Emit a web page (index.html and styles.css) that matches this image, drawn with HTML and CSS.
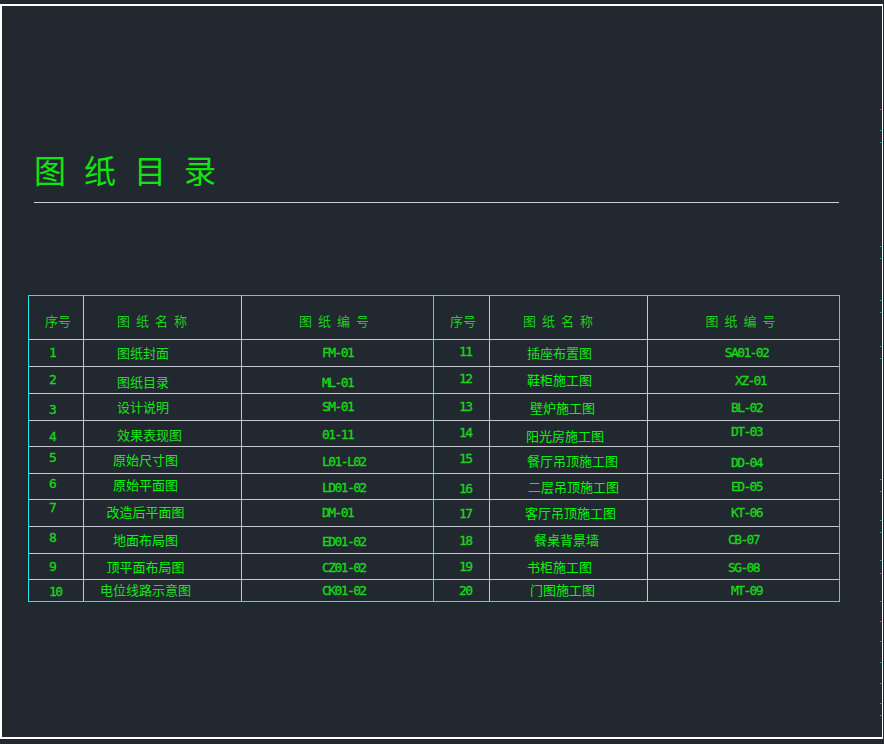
FILE: index.html
```html
<!DOCTYPE html>
<html lang="zh-CN">
<head>
<meta charset="utf-8">
<title>图纸目录</title>
<link rel="stylesheet" href="styles.css">
</head>
<body>
<div class="sheet">
  <h1 class="title">图纸目录</h1>

  <div class="table">
    <div class="half left">
      <div class="cell hd no1">序号</div>
      <div class="cell hd sp nm">图纸名称</div>
      <div class="cell hd sp cdh">图纸编号</div>

      <div class="cell num no1">1</div>
      <div class="cell name nm dim">图纸封面</div>
      <div class="cell code cd">FM-01</div>

      <div class="cell num no1">2</div>
      <div class="cell name nm dim v2">图纸目录</div>
      <div class="cell code cd v3">ML-01</div>

      <div class="cell num no1 v3">3</div>
      <div class="cell name nm dim">设计说明</div>
      <div class="cell code cd">SM-01</div>

      <div class="cell num no1 v3">4</div>
      <div class="cell name nm dim v1">效果表现图</div>
      <div class="cell code cd v1">01-11</div>

      <div class="cell num no1 vm2">5</div>
      <div class="cell name ctr">原始尺寸图</div>
      <div class="cell code cd v2">L01-L02</div>

      <div class="cell num no1 vm3">6</div>
      <div class="cell name ctr vm2">原始平面图</div>
      <div class="cell code cd v1">LD01-02</div>

      <div class="cell num no1 vm5">7</div>
      <div class="cell name ctr vm1">改造后平面图</div>
      <div class="cell code cd">DM-01</div>

      <div class="cell num no1 vm2">8</div>
      <div class="cell name ctr">地面布局图</div>
      <div class="cell code cd v2">ED01-02</div>

      <div class="cell num no1">9</div>
      <div class="cell name ctr">顶平面布局图</div>
      <div class="cell code cd v1">CZ01-02</div>

      <div class="cell num no1 v1">10</div>
      <div class="cell name ctr dim vm1">电位线路示意图</div>
      <div class="cell code cd">CK01-02</div>
    </div>

    <div class="half right">
      <div class="cell hd no1">序号</div>
      <div class="cell hd sp nm">图纸名称</div>
      <div class="cell hd sp cdh6">图纸编号</div>

      <div class="cell num no2 vm1">11</div>
      <div class="cell name nm5 dim">插座布置图</div>
      <div class="cell code cd6">SA01-02</div>

      <div class="cell num no2 vm1">12</div>
      <div class="cell name nm5">鞋柜施工图</div>
      <div class="cell code cd6 h4 v1">XZ-01</div>

      <div class="cell num no2">13</div>
      <div class="cell name nm5 h3 v1">壁炉施工图</div>
      <div class="cell code cd6 v1">BL-02</div>

      <div class="cell num no2 vm1">14</div>
      <div class="cell name nm5 hm1 v2">阳光房施工图</div>
      <div class="cell code cd6 vm2">DT-03</div>

      <div class="cell num no2 vm1">15</div>
      <div class="cell name nm5 v1">餐厅吊顶施工图</div>
      <div class="cell code cd6 v3">DD-04</div>

      <div class="cell num no2 v2">16</div>
      <div class="cell name nm5 h1">二层吊顶施工图</div>
      <div class="cell code cd6">ED-05</div>

      <div class="cell num no2 v1">17</div>
      <div class="cell name nm5 hm2">客厅吊顶施工图</div>
      <div class="cell code cd6">KT-06</div>

      <div class="cell num no2 v1">18</div>
      <div class="cell name nm5 h7">餐桌背景墙</div>
      <div class="cell code cd6 hm3">CB-07</div>

      <div class="cell num no2">19</div>
      <div class="cell name nm5">书柜施工图</div>
      <div class="cell code cd6 hm3 v1">SG-08</div>

      <div class="cell num no2">20</div>
      <div class="cell name nm5 h3 vm1">门图施工图</div>
      <div class="cell code cd6">MT-09</div>
    </div>
  </div>

  <div class="ruler">
    <i class="tick" style="top:103px"></i>
    <i class="tick" style="top:124px"></i>
    <i class="tick" style="top:136px"></i>
    <i class="tick" style="top:240px"></i>
    <i class="tick" style="top:252px"></i>
    <i class="tick" style="top:294px"></i>
    <i class="tick" style="top:306px"></i>
    <i class="tick" style="top:340px"></i>
    <i class="tick" style="top:352px"></i>
    <i class="tick" style="top:473px"></i>
    <i class="tick" style="top:485px"></i>
    <i class="tick" style="top:514px"></i>
    <i class="tick" style="top:526px"></i>
    <i class="tick" style="top:554px"></i>
    <i class="tick" style="top:567px"></i>
    <i class="tick" style="top:595px"></i>
    <i class="tick" style="top:615px"></i>
    <i class="tick" style="top:635px"></i>
    <i class="tick" style="top:656px"></i>
    <i class="tick" style="top:677px"></i>
    <i class="tick" style="top:697px"></i>
    <i class="tick" style="top:709px"></i>
  </div>
</div>
</body>
</html>
```

FILE: styles.css
```css
html, body {
  margin: 0;
  padding: 0;
  background: #212830;
}

.sheet {
  position: relative;
  box-sizing: border-box;
  width: 883px;
  height: 735px;
  margin-top: 4px;
  border: 2px solid #ffffff;
  border-right-width: 1px;
  background: #212830;
  overflow: hidden;
}

.title {
  margin: 0 0 0 32px;
  width: 805px;
  padding: 147px 0 17px 0;
  font-family: "Noto Sans CJK SC", sans-serif;
  font-weight: 400;
  font-size: 32px;
  line-height: 32px;
  letter-spacing: 18px;
  color: #12e412;
  border-bottom: 1px solid #cfcfcf;
}

.table {
  display: flex;
  gap: 1px;
  width: fit-content;
  margin: 92px 0 0 26px;
  border: 1px solid #22e4ec;
  background: #22e4ec;
}

.half {
  display: grid;
  gap: 1px;
  background: #c8c8c8;
  grid-template-rows: 43px 26px 26px 26px 25px 26px 25px 26px 26px 25px 21px;
}

.half.left {
  grid-template-columns: 54px 157px 191px;
}

.half.right {
  grid-template-columns: 55px 157px 191px;
}

.cell {
  box-sizing: border-box;
  display: flex;
  align-items: center;
  background: #212830;
  white-space: nowrap;
  line-height: 16px;
}

/* header */
.hd {
  padding-top: 6px;
  font-family: "Noto Sans CJK SC", sans-serif;
  font-size: 13px;
  color: #1cd01c;
}
.sp { letter-spacing: 6px; }
.cdh { padding-left: 57px; }
.cdh6 { justify-content: center; }

/* text kinds */
.num, .code {
  font-family: "DejaVu Sans Mono", monospace;
  font-size: 13px;
  letter-spacing: -1.6px;
  color: #18d818;
  -webkit-text-stroke: 0.3px #18d818;
}
.name {
  font-family: "Noto Sans CJK SC", sans-serif;
  font-size: 13px;
  color: #08f408;
}
.name.dim { color: #1ce01c; }

/* horizontal placement */
.no1 { padding-left: 16px; }
.num.no1 { padding-left: 20px; }
.num.no2 { padding-left: 25px; }
.hd.no1 { padding-left: 16px; }
.nm { padding-left: 33px; }
.ctr { justify-content: center; padding-right: 34px; }
.cd { padding-left: 80px; }
.nm5 { padding-left: 37px; }
.nm5.h1 { padding-left: 38px; }
.nm5.h3 { padding-left: 40px; }
.nm5.h7 { padding-left: 44px; }
.nm5.hm1 { padding-left: 36px; }
.nm5.hm2 { padding-left: 35px; }
.cd6 { justify-content: center; padding-left: 6px; }
.cd6.h4 { padding-left: 14px; }
.cd6.hm3 { padding-left: 0; }

/* vertical nudges (half of padding) */
.v1 { padding-top: 2px; }
.v2 { padding-top: 4px; }
.v3 { padding-top: 6px; }
.vm1 { padding-bottom: 2px; }
.vm2 { padding-bottom: 4px; }
.vm3 { padding-bottom: 6px; }
.vm5 { padding-bottom: 10px; }

/* right-hand ruler ticks */
.ruler {
  position: absolute;
  top: 0;
  right: 0;
  bottom: 0;
  width: 2px;
}
.tick {
  position: absolute;
  left: 0;
  width: 2px;
  height: 1px;
  background: #1f8ea6;
}
```
